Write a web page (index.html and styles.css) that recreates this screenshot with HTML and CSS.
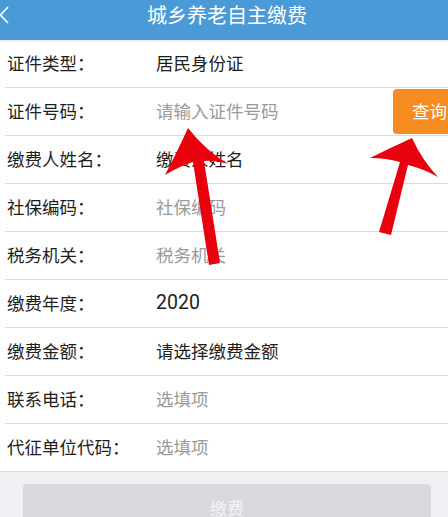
FILE: index.html
```html
<!DOCTYPE html>
<html lang="zh-CN">
<head>
<meta charset="utf-8">
<title>城乡养老自主缴费</title>
<link rel="stylesheet" href="styles.css">
</head>
<body>
<div class="page">
  <header class="topbar">
    <svg class="back" width="10" height="30" viewBox="0 0 10 30"><polyline points="8,7 0.5,15 8,23" fill="none" stroke="#fff" stroke-width="1.6"/></svg>
    <h1 class="title">城乡养老自主缴费</h1>
    <span></span>
  </header>
  <ul class="form">
    <li class="row"><span class="label">证件类型：</span><span class="value">居民身份证</span></li>
    <li class="row"><span class="label">证件号码：</span><span class="value hint">请输入证件号码</span><button class="query">查询</button></li>
    <li class="row"><span class="label">缴费人姓名：</span><span class="value">缴费人姓名</span></li>
    <li class="row"><span class="label">社保编码：</span><span class="value hint">社保编码</span></li>
    <li class="row"><span class="label">税务机关：</span><span class="value hint">税务机关</span></li>
    <li class="row"><span class="label">缴费年度：</span><span class="value num">2020</span></li>
    <li class="row"><span class="label">缴费金额：</span><span class="value">请选择缴费金额</span></li>
    <li class="row"><span class="label">联系电话：</span><span class="value hint">选填项</span></li>
    <li class="row last"><span class="label">代征单位代码：</span><span class="value hint">选填项</span></li>
  </ul>
  <div class="footer">
    <button class="pay">缴费</button>
  </div>
  <svg class="arrows" width="448" height="517" viewBox="0 0 448 517">
    <path d="M188,128 Q178,150 165,175 Q180,166 193,162 L209,265 L220,263 L204,161 Q216,160 228,164 Q205,150 188,128 Z" fill="#e8000c"/>
    <path d="M412,138 Q390,148 370,158 Q386,158 400,162 L379,232 L391,235 L408,165 Q424,169 438,177 Q422,160 412,138 Z" fill="#e8000c"/>
  </svg>
</div>
</body>
</html>
```
FILE: styles.css
```css
* { box-sizing: border-box; }
html, body { margin: 0; padding: 0; }
body {
  font-family: "Noto Sans CJK SC", "Noto Sans", sans-serif;
  background: #efeff4;
  overflow: hidden;
}
.page {
  position: relative;
  width: 448px;
  height: 517px;
  overflow: hidden;
}
.topbar {
  height: 40px;
  background: #4a9ad8;
  display: grid;
  grid-template-columns: 1fr auto 1fr;
  align-items: start;
  padding-left: 6px;
  box-shadow: 0 1px 2px rgba(0, 0, 0, 0.12);
  position: relative;
}
.back {
  display: block;
  margin-left: -6px;
}
.title {
  margin: 0;
  font-size: 20px;
  font-weight: normal;
  line-height: 30px;
  color: #fff;
}
.form {
  list-style: none;
  margin: 0;
  padding: 0 0 0 5px;
  background: #fff;
  border-bottom: 1px solid #dcdcdc;
}
.row {
  height: 48px;
  display: flex;
  align-items: center;
  border-bottom: 1px solid #dcdcdc;
}
.row.last { border-bottom: none; height: 47px; }
.label {
  width: 151px;
  padding: 0 0 3px 2px;
  font-size: 17.5px;
  color: #1e1e1e;
  flex-shrink: 0;
}
.value {
  font-size: 17.5px;
  padding-bottom: 3px;
  color: #1e1e1e;
  flex: 1;
}
.value.hint { color: #9a9a9a; }
.value.num { font-size: 19.5px; font-family: Roboto, "Noto Sans", sans-serif; }
.query {
  width: 64px;
  height: 45px;
  margin-right: -9px;
  border: none;
  border-radius: 4px;
  background: #f68b1f;
  color: #fff;
  font-family: inherit;
  font-size: 17.5px;
  text-align: left;
  padding: 0 0 2px 19px;
  flex-shrink: 0;
}
.footer {
  padding: 12px 17px 0 23px;
}
.pay {
  display: block;
  width: 408px;
  height: 48px;
  border: none;
  border-radius: 4px;
  background: #d9d9dd;
  color: #f3f3f5;
  font-family: inherit;
  font-size: 17px;
  line-height: 46px;
  padding: 0 0 0 0;
}
.arrows {
  position: absolute;
  left: 0;
  top: 0;
  pointer-events: none;
}
```
